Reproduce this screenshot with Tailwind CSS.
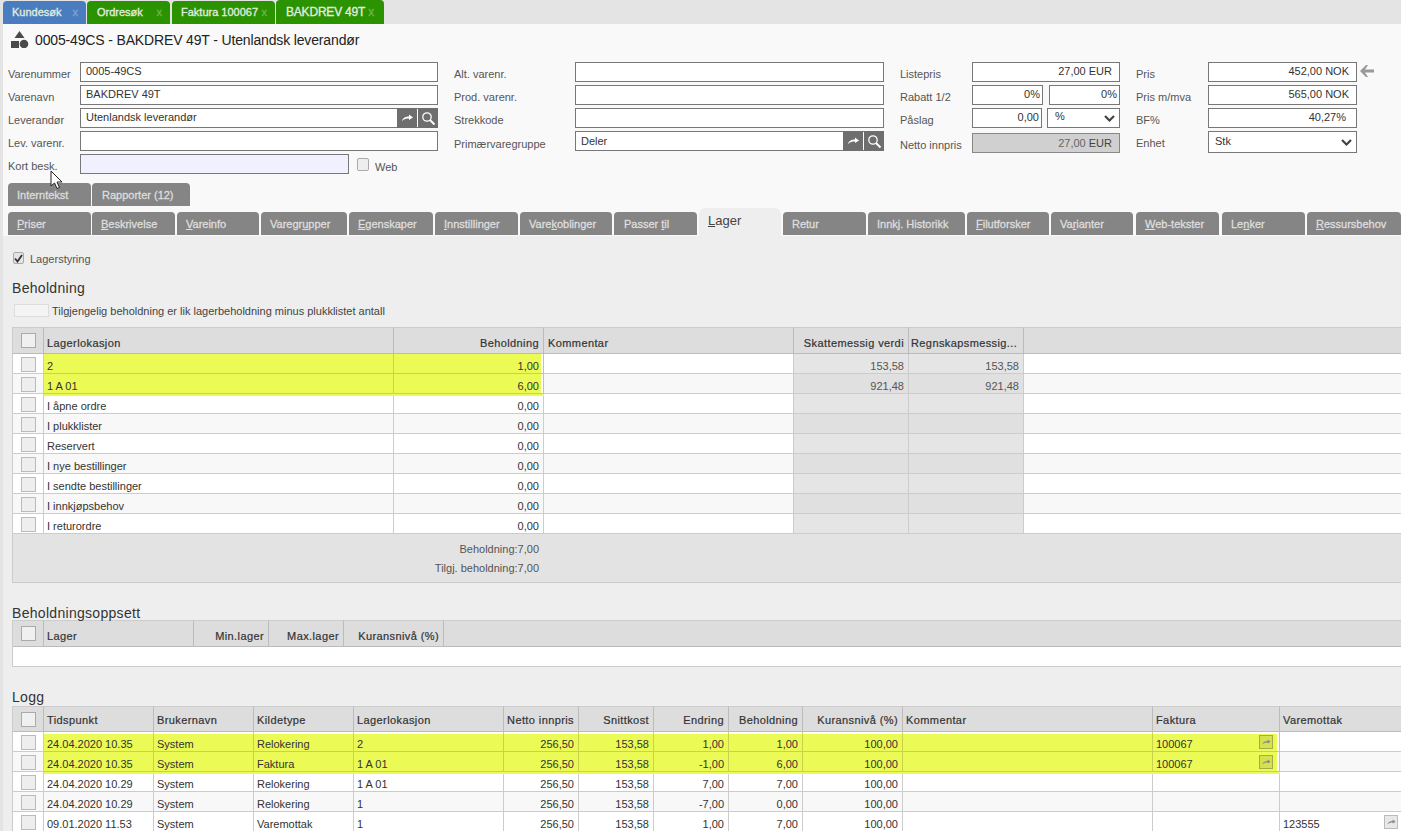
<!DOCTYPE html>
<html lang="en">
<head>
<meta charset="UTF-8">
<title>BAKDREV 49T</title>
<script src="https://cdn.jsdelivr.net/npm/@tailwindcss/browser@4"></script>
</head>
<body class="overflow-hidden">
<div class="relative w-[1401px] h-[831px] overflow-hidden border-l-[3px] border-[#e4e4e4] bg-[#eeeeee] font-['Liberation_Sans',Arial,sans-serif] text-[11px] text-[#444]">

  <!-- Top tabs -->
  <div class="flex h-[24px] items-end whitespace-nowrap bg-[#e4e4e4] text-[11px] text-[#e4eee0] [-webkit-text-stroke:0.3px]">
    <div class="flex h-[23px] w-[83px] items-center justify-between rounded-t-[4px] bg-[#4a7dbf] pl-[9px] pr-[8px]"><span>Kundesøk</span><span class="text-[#7fa5d6]">x</span></div>
    <div class="ml-[1px] flex h-[23px] w-[83px] items-center justify-between rounded-t-[4px] bg-[#2b9200] pl-[10px] pr-[8px]"><span>Ordresøk</span><span class="text-[#6fb650]">x</span></div>
    <div class="ml-[2px] flex h-[23px] w-[103px] items-center justify-between rounded-t-[4px] bg-[#2b9200] pl-[9px] pr-[8px]"><span>Faktura 100067</span><span class="text-[#6fb650]">x</span></div>
    <div class="ml-[1px] flex h-[24px] w-[108px] items-start rounded-t-[4px] bg-[#2b9200] pl-[10px] pt-[3px] text-[12px] tracking-[-0.2px]"><span>BAKDREV 49T</span><span class="ml-[3px] text-[#6fb650]">x</span></div>
  </div>

  <!-- Header and form -->
  <div class="h-[212px] bg-[#f9f9f9]">
    <div class="flex h-[38px] items-start pl-[7px] pt-[6px]">
      <svg class="h-[18px] w-[20px]" viewBox="0 0 20 18" fill="#4a4a4a"><path d="M9.5 1 L14.5 8 L4.5 8 Z"/><rect x="1" y="11" width="8" height="7"/><circle cx="14" cy="14" r="4.3"/></svg>
      <h1 class="ml-[5px] text-[14px] font-normal leading-[20px] tracking-[-0.15px] text-[#222]">0005-49CS - BAKDREV 49T - Utenlandsk leverandør</h1>
    </div>

    <div class="flex pl-[5px]">
      <!-- Column 1 -->
      <div class="flex w-[430px] flex-col gap-[3px]">
        <div class="flex h-[20px]"><label class="w-[72px] pt-[5px] leading-[14px] text-[#555]">Varenummer</label><div class="h-[20px] w-[358px] border border-[#777] bg-white pl-[5px] leading-[16px] text-[#333]">0005-49CS</div></div>
        <div class="flex h-[20px]"><label class="w-[72px] pt-[5px] leading-[14px] text-[#555]">Varenavn</label><div class="h-[20px] w-[358px] border border-[#777] bg-white pl-[5px] leading-[16px] text-[#333]">BAKDREV 49T</div></div>
        <div class="flex h-[20px]"><label class="w-[72px] pt-[5px] leading-[14px] text-[#555]">Leverandør</label><div class="flex h-[20px] w-[358px] border border-[#777] bg-white"><span class="flex-1 pl-[5px] leading-[16px] text-[#333]">Utenlandsk leverandør</span>
          <span class="flex h-[20px] w-[20px] -mt-[1px] items-center justify-center bg-[#6e6e6e]"><svg class="h-[8px] w-[11px]" viewBox="0 0 11 8" fill="#fff"><path d="M0 7 C1 3.5 4 2.5 7 2.5 L7 0.5 L11 3.5 L7 6 L7 4.5 C4 4.5 2 5 0 7 Z"/></svg></span>
          <span class="ml-[1px] flex h-[20px] w-[20px] -mt-[1px] -mr-[1px] items-center justify-center bg-[#6e6e6e]"><svg class="h-[15px] w-[15px]" viewBox="0 0 15 15" fill="none" stroke="#fff"><circle cx="6" cy="6" r="4.2" stroke-width="1.3"/><path d="M9 9 L13.5 13.5" stroke-width="2"/></svg></span></div></div>
        <div class="flex h-[20px]"><label class="w-[72px] pt-[5px] leading-[14px] text-[#555]">Lev. varenr.</label><div class="h-[20px] w-[358px] border border-[#777] bg-white"></div></div>
        <div class="flex h-[20px] items-start"><label class="w-[72px] pt-[5px] leading-[14px] text-[#555]">Kort besk.</label><div class="h-[20px] w-[269px] border border-[#777] bg-[#f0f0fe]"></div>
          <span class="ml-[8px] mt-[4px] h-[13px] w-[12px] rounded-[2px] border border-[#aaa] bg-[#eee]"></span><span class="ml-[6px] pt-[6px] leading-[14px] text-[#555]">Web</span></div>
      </div>
      <!-- Column 2 -->
      <div class="ml-[16px] flex w-[430px] flex-col gap-[3px]">
        <div class="flex h-[20px]"><label class="w-[121px] pt-[5px] leading-[14px] text-[#555]">Alt. varenr.</label><div class="h-[20px] w-[309px] border border-[#777] bg-white"></div></div>
        <div class="flex h-[20px]"><label class="w-[121px] pt-[5px] leading-[14px] text-[#555]">Prod. varenr.</label><div class="h-[20px] w-[309px] border border-[#777] bg-white"></div></div>
        <div class="flex h-[20px]"><label class="w-[121px] pt-[5px] leading-[14px] text-[#555]">Strekkode</label><div class="h-[20px] w-[309px] border border-[#777] bg-white"></div></div>
        <div class="flex h-[20px]"><label class="w-[121px] pt-[6px] leading-[14px] text-[#555]">Primærvaregruppe</label><div class="flex h-[20px] w-[309px] border border-[#777] bg-white"><span class="flex-1 pl-[5px] leading-[18px] text-[#333]">Deler</span>
          <span class="flex h-[20px] w-[20px] -mt-[1px] items-center justify-center bg-[#6e6e6e]"><svg class="h-[8px] w-[11px]" viewBox="0 0 11 8" fill="#fff"><path d="M0 7 C1 3.5 4 2.5 7 2.5 L7 0.5 L11 3.5 L7 6 L7 4.5 C4 4.5 2 5 0 7 Z"/></svg></span>
          <span class="ml-[1px] flex h-[20px] w-[20px] -mt-[1px] -mr-[1px] items-center justify-center bg-[#6e6e6e]"><svg class="h-[15px] w-[15px]" viewBox="0 0 15 15" fill="none" stroke="#fff"><circle cx="6" cy="6" r="4.2" stroke-width="1.3"/><path d="M9 9 L13.5 13.5" stroke-width="2"/></svg></span></div></div>
      </div>
      <!-- Column 3 -->
      <div class="ml-[16px] flex w-[220px] flex-col gap-[3px]">
        <div class="flex h-[20px]"><label class="w-[72px] pt-[5px] leading-[14px] text-[#555]">Listepris</label><div class="h-[20px] w-[148px] border border-[#777] bg-white pr-[7px] text-right leading-[16px] text-[#333]">27,00 EUR</div></div>
        <div class="flex h-[20px]"><label class="w-[72px] pt-[5px] leading-[14px] text-[#555]">Rabatt 1/2</label><div class="h-[20px] w-[71px] border border-[#777] bg-white pr-[2px] text-right leading-[16px] text-[#333]">0%</div><div class="ml-[6px] h-[20px] w-[71px] border border-[#777] bg-white pr-[2px] text-right leading-[16px] text-[#333]">0%</div></div>
        <div class="flex h-[20px]"><label class="w-[72px] pt-[5px] leading-[14px] text-[#555]">Påslag</label><div class="h-[20px] w-[70px] border border-[#777] bg-white pr-[2px] text-right leading-[16px] text-[#333]">0,00</div>
          <div class="ml-[5px] flex h-[20px] w-[73px] items-center justify-between border border-[#777] bg-white pl-[7px] pr-[4px] text-[#333]"><span class="-mt-[3px]">%</span><svg class="h-[7px] w-[11px]" viewBox="0 0 11 7" fill="none" stroke="#444" stroke-width="2.2"><path d="M1 1 L5.5 5.5 L10 1"/></svg></div></div>
        <div class="mt-[2px] flex h-[20px]"><label class="w-[72px] pt-[5px] leading-[14px] text-[#555]">Netto innpris</label><div class="h-[20px] w-[148px] border border-[#888] bg-[#d0d0d0] pr-[7px] text-right leading-[18px] text-[#666]">27,00 <span class="text-[#444]">EUR</span></div></div>
      </div>
      <!-- Column 4 -->
      <div class="ml-[16px] flex w-[240px] flex-col gap-[3px]">
        <div class="flex h-[20px]"><label class="w-[72px] pt-[5px] leading-[14px] text-[#555]">Pris</label><div class="h-[20px] w-[149px] border border-[#777] bg-white pr-[7px] text-right leading-[16px] text-[#333]">452,00 NOK</div>
          <svg class="ml-[3px] mt-[3px] h-[12px] w-[14px]" viewBox="0 0 14 12" fill="#999"><path d="M6 0 L8 0 L5 4.5 L14 4.5 L14 7.5 L5 7.5 L8 12 L6 12 L0 6 Z"/></svg></div>
        <div class="flex h-[20px]"><label class="w-[72px] pt-[5px] leading-[14px] text-[#555]">Pris m/mva</label><div class="h-[20px] w-[149px] border border-[#777] bg-white pr-[7px] text-right leading-[16px] text-[#333]">565,00 NOK</div></div>
        <div class="flex h-[20px]"><label class="w-[72px] pt-[5px] leading-[14px] text-[#555]">BF%</label><div class="h-[20px] w-[149px] border border-[#777] bg-white pr-[10px] text-right leading-[16px] text-[#333]">40,27%</div></div>
        <div class="flex h-[20px]"><label class="w-[72px] pt-[5px] leading-[14px] text-[#555]">Enhet</label><div class="flex h-[22px] w-[149px] items-center justify-between border border-[#777] bg-white pl-[6px] pr-[4px] text-[#333]"><span class="-mt-[2px]">Stk</span><svg class="h-[7px] w-[11px]" viewBox="0 0 11 7" fill="none" stroke="#444" stroke-width="2.2"><path d="M1 1 L5.5 5.5 L10 1"/></svg></div></div>
      </div>
    </div>

    <!-- Secondary tabs -->
    <div class="mt-[9px] flex pl-[5px] text-[#dedede] [-webkit-text-stroke:0.3px]">
      <div class="h-[23px] w-[83px] rounded-t-[4px] bg-[#858585] pl-[9px] leading-[24px]">Interntekst</div>
      <div class="ml-[1px] h-[23px] w-[98px] rounded-t-[4px] bg-[#858585] pl-[10px] leading-[24px]">Rapporter (12)</div>
    </div>

    <!-- Main tabs -->
    <div class="mt-[2px] flex h-[28px] items-start pl-[5px] text-[#dedede] [-webkit-text-stroke:0.3px]">
      <div class="mt-[4px] h-[23px] w-[83px] rounded-t-[4px] bg-[#858585] pl-[9px] leading-[24px]"><u>P</u>riser</div>
      <div class="ml-[1px] mt-[4px] h-[23px] w-[83px] rounded-t-[4px] bg-[#858585] pl-[9px] leading-[24px]"><u>B</u>eskrivelse</div>
      <div class="ml-[2px] mt-[4px] h-[23px] w-[82px] rounded-t-[4px] bg-[#858585] pl-[9px] leading-[24px]"><u>V</u>areinfo</div>
      <div class="ml-[2px] mt-[4px] h-[23px] w-[86px] rounded-t-[4px] bg-[#858585] pl-[9px] leading-[24px]">Varegr<u>u</u>pper</div>
      <div class="ml-[2px] mt-[4px] h-[23px] w-[84px] rounded-t-[4px] bg-[#858585] pl-[9px] leading-[24px]"><u>E</u>genskaper</div>
      <div class="ml-[2px] mt-[4px] h-[23px] w-[83px] rounded-t-[4px] bg-[#858585] pl-[9px] leading-[24px]"><u>I</u>nnstillinger</div>
      <div class="ml-[2px] mt-[4px] h-[23px] w-[92px] rounded-t-[4px] bg-[#858585] pl-[9px] leading-[24px]">Vare<u>k</u>oblinger</div>
      <div class="ml-[2px] mt-[4px] h-[23px] w-[83px] rounded-t-[4px] bg-[#858585] pl-[10px] leading-[24px]">Passer <u>t</u>il</div>
      <div class="ml-[2px] h-[28px] w-[82px] rounded-t-[6px] bg-[#eeeeee] pl-[9px] pt-[5px] text-[13px] leading-[16px] text-[#444] [-webkit-text-stroke:0px]"><u>L</u>ager</div>
      <div class="ml-[2px] mt-[4px] h-[23px] w-[83px] rounded-t-[4px] bg-[#858585] pl-[9px] leading-[24px]">Retur</div>
      <div class="ml-[2px] mt-[4px] h-[23px] w-[97px] rounded-t-[4px] bg-[#858585] pl-[9px] leading-[24px]">Innkj. Historikk</div>
      <div class="ml-[2px] mt-[4px] h-[23px] w-[82px] rounded-t-[4px] bg-[#858585] pl-[9px] leading-[24px]"><u>F</u>ilutforsker</div>
      <div class="ml-[2px] mt-[4px] h-[23px] w-[82px] rounded-t-[4px] bg-[#858585] pl-[9px] leading-[24px]">Va<u>r</u>ianter</div>
      <div class="ml-[3px] mt-[4px] h-[23px] w-[83px] rounded-t-[4px] bg-[#858585] pl-[9px] leading-[24px]"><u>W</u>eb-tekster</div>
      <div class="ml-[3px] mt-[4px] h-[23px] w-[83px] rounded-t-[4px] bg-[#858585] pl-[9px] leading-[24px]">Le<u>n</u>ker</div>
      <div class="ml-[2px] mt-[4px] h-[23px] w-[94px] rounded-t-[4px] bg-[#858585] pl-[9px] leading-[24px]"><u>R</u>essursbehov</div>
    </div>
  </div>

  <!-- Lager panel -->
  <div class="pl-[9px]">
    <div class="flex h-[34px] items-start pl-[1px] pt-[16px]">
      <span class="flex h-[12px] w-[11px] items-center justify-center rounded-[2px] border border-[#aaa] bg-[#e4e4e4]"><svg class="h-[9px] w-[9px]" viewBox="0 0 9 9" fill="none" stroke="#333" stroke-width="1.8"><path d="M1 4.5 L3.5 7.5 L8 1"/></svg></span>
      <span class="ml-[6px] leading-[14px] text-[#555]">Lagerstyring</span>
    </div>
    <h2 class="mt-[10px] text-[14px] font-normal leading-[16px] tracking-[0.3px] text-[#333]">Beholdning</h2>
    <div class="mt-[8px] flex h-[13px] items-center pl-[2px]">
      <span class="h-[13px] w-[35px] border border-[#ddd] bg-[#f4f4f4]"></span><span class="ml-[3px] pt-[2px] text-[#444]">Tilgjengelig beholdning er lik lagerbeholdning minus plukklistet antall</span>
    </div>

    <!-- Beholdning table -->
    <table class="mt-[10px] w-[1389px] table-fixed border-separate border-spacing-0 border-l border-[#ccc] whitespace-nowrap text-[#333]">
      <colgroup><col class="w-[31px]"><col class="w-[350px]"><col class="w-[150px]"><col class="w-[250px]"><col class="w-[115px]"><col class="w-[115px]"><col></colgroup>
      <thead><tr class="bg-[#dddddd] tracking-[0.4px] [-webkit-text-stroke:0.2px]">
        <th class="h-[27px] border-y border-r border-[#bbb] border-t-[#ccc] p-0 align-top"><span class="ml-[8px] mt-[5px] block h-[15px] w-[15px] border border-[#aaa] bg-[#f0f0f0]"></span></th>
        <th class="h-[27px] border-y border-r border-[#bbb] border-t-[#ccc] pl-[3px] pt-[8px] text-left align-top font-normal leading-[14px]">Lagerlokasjon</th>
        <th class="h-[27px] border-y border-r border-[#bbb] border-t-[#ccc] pr-[4px] pt-[8px] text-right align-top font-normal leading-[14px]">Beholdning</th>
        <th class="h-[27px] border-y border-r border-[#bbb] border-t-[#ccc] pl-[4px] pt-[8px] text-left align-top font-normal leading-[14px]">Kommentar</th>
        <th class="h-[27px] border-y border-r border-[#bbb] border-t-[#ccc] pr-[4px] pt-[8px] text-right align-top font-normal leading-[14px]">Skattemessig verdi</th>
        <th class="h-[27px] border-y border-r border-[#bbb] border-t-[#ccc] pl-[2px] pt-[8px] text-left align-top font-normal leading-[14px]">Regnskapsmessig...</th>
        <th class="h-[27px] border-y border-[#bbb] border-t-[#ccc]"></th>
      </tr></thead>
      <tbody id="stock-rows"></tbody>
      <tfoot><tr><td colspan="7" class="h-[49px] border-b border-[#ccc] bg-[#e3e3e3] p-0 align-top">
        <div class="w-[526px] pt-[6px] text-right leading-[19px] text-[#555]">Beholdning:7,00<br>Tilgj. beholdning:7,00</div>
      </td></tr></tfoot>
    </table>

    <h2 class="mt-[22px] h-[15px] text-[14px] font-normal leading-[16px] tracking-[0.3px] text-[#333]">Beholdningsoppsett</h2>
    <table class="w-[1389px] table-fixed border-separate border-spacing-0 border-l border-[#ccc] whitespace-nowrap text-[#333]">
      <colgroup><col class="w-[31px]"><col class="w-[150px]"><col class="w-[75px]"><col class="w-[75px]"><col class="w-[100px]"><col></colgroup>
      <thead><tr class="bg-[#dddddd] tracking-[0.4px] [-webkit-text-stroke:0.2px]">
        <th class="h-[27px] border-y border-r border-[#bbb] border-t-[#ccc] p-0 align-top"><span class="ml-[8px] mt-[5px] block h-[15px] w-[15px] border border-[#aaa] bg-[#f0f0f0]"></span></th>
        <th class="border-y border-r border-[#bbb] border-t-[#ccc] pl-[3px] pt-[8px] text-left align-top font-normal leading-[14px]">Lager</th>
        <th class="border-y border-r border-[#bbb] border-t-[#ccc] pr-[4px] pt-[8px] text-right align-top font-normal leading-[14px]">Min.lager</th>
        <th class="border-y border-r border-[#bbb] border-t-[#ccc] pr-[4px] pt-[8px] text-right align-top font-normal leading-[14px]">Max.lager</th>
        <th class="border-y border-r border-[#bbb] border-t-[#ccc] pr-[4px] pt-[8px] text-right align-top font-normal leading-[14px]">Kuransnivå (%)</th>
        <th class="border-y border-[#bbb] border-t-[#ccc]"></th>
      </tr></thead>
      <tbody><tr><td colspan="6" class="h-[20px] border-b border-[#ccc] bg-white"></td></tr></tbody>
    </table>

    <h2 class="mt-[22px] h-[17px] text-[14px] font-normal leading-[16px] tracking-[0.3px] text-[#333]">Logg</h2>
    <table class="w-[1389px] table-fixed border-separate border-spacing-0 border-l border-[#ccc] whitespace-nowrap text-[#333]">
      <colgroup><col class="w-[31px]"><col class="w-[110px]"><col class="w-[100px]"><col class="w-[100px]"><col class="w-[150px]"><col class="w-[75px]"><col class="w-[75px]"><col class="w-[75px]"><col class="w-[74px]"><col class="w-[100px]"><col class="w-[250px]"><col class="w-[127px]"><col></colgroup>
      <thead><tr class="bg-[#dddddd] tracking-[0.4px] [-webkit-text-stroke:0.2px]">
        <th class="h-[26px] border-y border-r border-[#bbb] border-t-[#ccc] p-0 align-top"><span class="ml-[8px] mt-[5px] block h-[15px] w-[15px] border border-[#aaa] bg-[#f0f0f0]"></span></th>
        <th class="border-y border-r border-[#bbb] border-t-[#ccc] pl-[3px] pt-[6px] text-left align-top font-normal leading-[14px]">Tidspunkt</th>
        <th class="border-y border-r border-[#bbb] border-t-[#ccc] pl-[3px] pt-[6px] text-left align-top font-normal leading-[14px]">Brukernavn</th>
        <th class="border-y border-r border-[#bbb] border-t-[#ccc] pl-[3px] pt-[6px] text-left align-top font-normal leading-[14px]">Kildetype</th>
        <th class="border-y border-r border-[#bbb] border-t-[#ccc] pl-[3px] pt-[6px] text-left align-top font-normal leading-[14px]">Lagerlokasjon</th>
        <th class="border-y border-r border-[#bbb] border-t-[#ccc] pr-[4px] pt-[6px] text-right align-top font-normal leading-[14px]">Netto innpris</th>
        <th class="border-y border-r border-[#bbb] border-t-[#ccc] pr-[4px] pt-[6px] text-right align-top font-normal leading-[14px]">Snittkost</th>
        <th class="border-y border-r border-[#bbb] border-t-[#ccc] pr-[4px] pt-[6px] text-right align-top font-normal leading-[14px]">Endring</th>
        <th class="border-y border-r border-[#bbb] border-t-[#ccc] pr-[4px] pt-[6px] text-right align-top font-normal leading-[14px]">Beholdning</th>
        <th class="border-y border-r border-[#bbb] border-t-[#ccc] pr-[4px] pt-[6px] text-right align-top font-normal leading-[14px]">Kuransnivå (%)</th>
        <th class="border-y border-r border-[#bbb] border-t-[#ccc] pl-[3px] pt-[6px] text-left align-top font-normal leading-[14px]">Kommentar</th>
        <th class="border-y border-r border-[#bbb] border-t-[#ccc] pl-[3px] pt-[6px] text-left align-top font-normal leading-[14px]">Faktura</th>
        <th class="border-y border-[#bbb] border-t-[#ccc] pl-[3px] pt-[6px] text-left align-top font-normal leading-[14px]">Varemottak</th>
      </tr></thead>
      <tbody id="log-rows"></tbody>
    </table>
  </div>

  <!-- Mouse cursor -->
  <svg class="absolute left-[47px] top-[170px] h-[20px] w-[14px]" viewBox="0 0 14 20"><path d="M1 1 L1 16 L4.5 13 L7 18.5 L9.5 17.5 L7 12 L12 12 Z" fill="#fff" stroke="#222" stroke-width="1"/></svg>
</div>

<script>
// rows for the stock table
const stock = [
  { name: "2", qty: "1,00", tax: "153,58", acc: "153,58", hl: "first" },
  { name: "1 A 01", qty: "6,00", tax: "921,48", acc: "921,48", hl: "last" },
  { name: "I åpne ordre", qty: "0,00" },
  { name: "I plukklister", qty: "0,00" },
  { name: "Reservert", qty: "0,00" },
  { name: "I nye bestillinger", qty: "0,00" },
  { name: "I sendte bestillinger", qty: "0,00" },
  { name: "I innkjøpsbehov", qty: "0,00" },
  { name: "I returordre", qty: "0,00" }
];

// rows for the log table
const log = [
  ["24.04.2020 10.35", "System", "Relokering", "2", "256,50", "153,58", "1,00", "1,00", "100,00", "", "100067", ""],
  ["24.04.2020 10.35", "System", "Faktura", "1 A 01", "256,50", "153,58", "-1,00", "6,00", "100,00", "", "100067", ""],
  ["24.04.2020 10.29", "System", "Relokering", "1 A 01", "256,50", "153,58", "7,00", "7,00", "100,00", "", "", ""],
  ["24.04.2020 10.29", "System", "Relokering", "1", "256,50", "153,58", "-7,00", "0,00", "100,00", "", "", ""],
  ["09.01.2020 11.53", "System", "Varemottak", "1", "256,50", "153,58", "1,00", "7,00", "100,00", "", "", "123555"]
];

const box = '<span class="ml-[8px] mt-[3px] block h-[15px] w-[15px] border border-[#bbb] bg-[#eeeeee]"></span>';
const link = (yellow) => `<span class="absolute -top-[2px] flex h-[14px] w-[14px] items-center justify-center border ${yellow ? 'right-[6px] border-[#a5ad4a] bg-[#d5e250]' : 'right-[3px] border-[#bbb] bg-[#e8e8e8]'}"><svg class="h-[6px] w-[9px]" viewBox="0 0 11 8" fill="#888"><path d="M0 7 C1 3.5 4 2.5 7 2.5 L7 0.5 L11 3.5 L7 6 L7 4.5 C4 4.5 2 5 0 7 Z"/></svg></span>`;

document.getElementById("stock-rows").innerHTML = stock.map((r, i) => {
  const alt = i % 2 === 1;
  const rowBg = alt ? "bg-[#f8f8f8]" : "bg-white";
  const cell = r.hl ? "bg-[#ebfa55] border-[#c8d24c]" : rowBg + " border-[#ccc]";
  const over = r.hl === "last" ? "relative shadow-[0_2px_0_#ebfa55]" : "";
  const qtyShadow = r.hl === "last" ? "relative shadow-[0_2px_0_#ebfa55,inset_-2px_0_0_#fff]" : r.hl ? "shadow-[inset_-2px_0_0_#fff]" : "";
  const grey = (alt ? "bg-[#e0e0e0]" : "bg-[#e5e5e5]") + " border-[#ccc]";
  return `<tr>
    <td class="h-[20px] border-b border-r border-[#ccc] p-0 align-top ${rowBg}">${box}</td>
    <td class="h-[20px] border-b border-r pl-[3px] pt-[5px] align-top leading-[14px] ${cell} ${over}">${r.name}</td>
    <td class="h-[20px] border-b border-r pr-[4px] pt-[5px] text-right align-top leading-[14px] ${cell} ${qtyShadow}">${r.qty}</td>
    <td class="h-[20px] border-b border-r border-[#ccc] ${rowBg}"></td>
    <td class="h-[20px] border-b border-r pr-[4px] pt-[5px] text-right align-top leading-[14px] text-[#555] ${grey}">${r.tax || ""}</td>
    <td class="h-[20px] border-b border-r pr-[4px] pt-[5px] text-right align-top leading-[14px] text-[#555] ${grey}">${r.acc || ""}</td>
    <td class="h-[20px] border-b border-[#ccc] ${rowBg}"></td>
  </tr>`;
}).join("");

document.getElementById("log-rows").innerHTML = log.map((r, i) => {
  const yellow = i < 2;
  const rowBg = i % 2 === 1 ? "bg-[#f8f8f8]" : "bg-white";
  const cells = r.map((text, c) => {
    const right = c >= 4 && c <= 8;
    const hl = yellow && c <= 10;
    const bg = hl ? "bg-[#ebfa55] border-[#c8d24c]" : rowBg + " border-[#ccc]";
    let fx = "";
    if (i === 0 && hl) fx = c === 10 ? "shadow-[inset_0_2px_0_#fff,inset_-2px_0_0_#fff]" : "shadow-[inset_0_2px_0_#fff]";
    if (i === 1 && hl) fx = c === 10 ? "relative shadow-[0_2px_0_#ebfa55,inset_-2px_0_0_#fff]" : "relative shadow-[0_2px_0_#ebfa55]";
    const align = right ? "pr-[4px] text-right" : "pl-[3px]";
    const border = c === 11 ? "border-b" : "border-b border-r";
    let inner = text;
    if (c === 10 && yellow) inner = `<div class="relative">${text}${link(true)}</div>`;
    if (c === 11 && text) inner = `<div class="relative">${text}${link(false)}</div>`;
    return `<td class="h-[20px] ${border} ${align} pt-[5px] align-top leading-[14px] ${bg} ${fx}">${inner}</td>`;
  });
  return `<tr><td class="h-[20px] border-b border-r border-[#ccc] p-0 align-top ${rowBg}">${box}</td>${cells.join("")}</tr>`;
}).join("");
</script>
</body>
</html>
